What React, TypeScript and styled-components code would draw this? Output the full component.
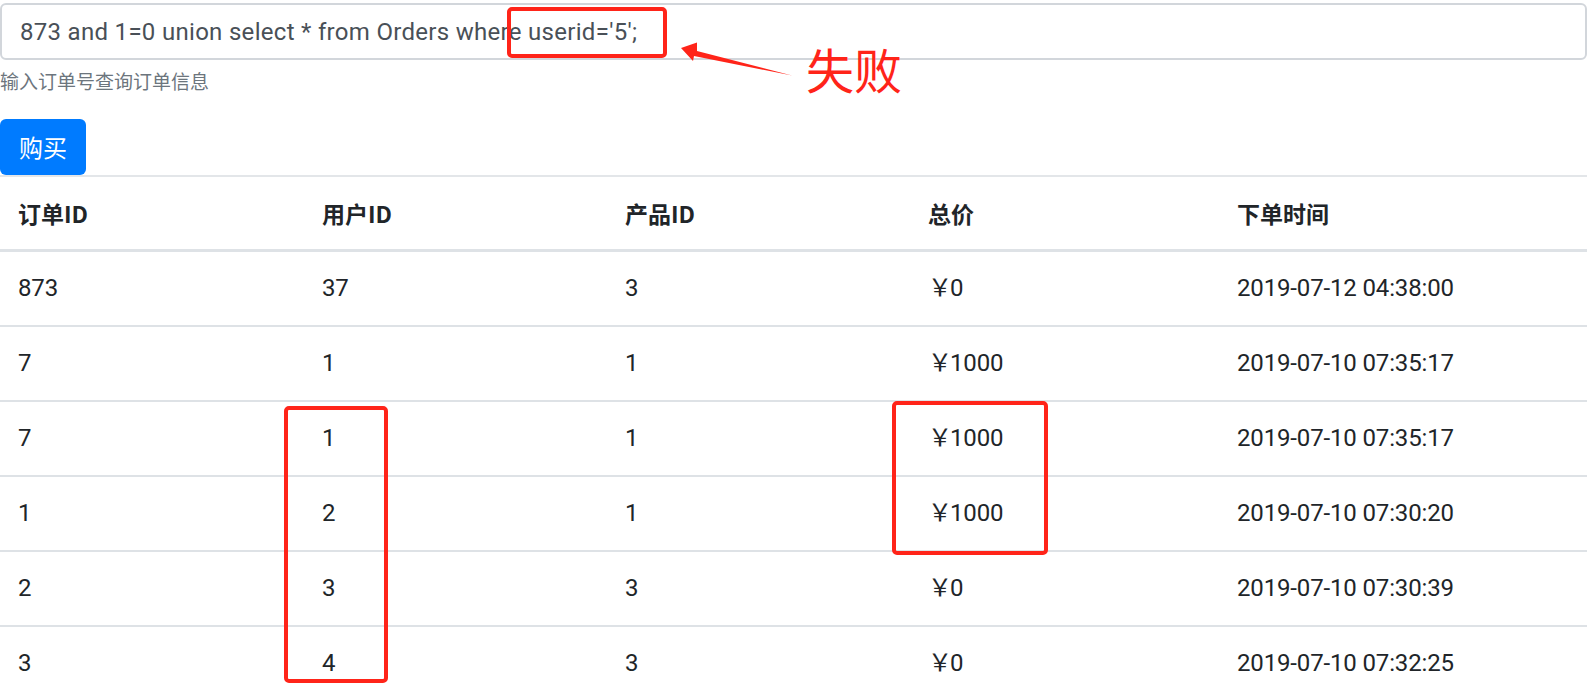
import styled, { createGlobalStyle } from "styled-components"

const GlobalStyle = createGlobalStyle`
    body {
        margin: 0;
        background: #fff;
        color: #212529;
        font-family: Roboto, "Noto Sans CJK SC", sans-serif;
    }
`

const orders = [
    { id: "873", user: "37", product: "3", total: "0", time: "2019-07-12 04:38:00" },
    { id: "7", user: "1", product: "1", total: "1000", time: "2019-07-10 07:35:17" },
    { id: "7", user: "1", product: "1", total: "1000", time: "2019-07-10 07:35:17" },
    { id: "1", user: "2", product: "1", total: "1000", time: "2019-07-10 07:30:20" },
    { id: "2", user: "3", product: "3", total: "0", time: "2019-07-10 07:30:39" },
    { id: "3", user: "4", product: "3", total: "0", time: "2019-07-10 07:32:25" },
]

export default function App() {
    return <Page>
        <GlobalStyle />

        <FormGroup>
            <Input readOnly value="873 and 1=0 union select * from Orders where userid='5';" />
            <HelpText>输入订单号查询订单信息</HelpText>
        </FormGroup>

        <BuyButton>购买</BuyButton>

        <Table>
            <colgroup>
                <col style={{ width: 304 }} />
                <col style={{ width: 303 }} />
                <col style={{ width: 303 }} />
                <col style={{ width: 309 }} />
                <col />
            </colgroup>
            <thead>
                <tr>
                    <Th>订单ID</Th>
                    <Th>用户ID</Th>
                    <Th>产品ID</Th>
                    <Th>总价</Th>
                    <Th>下单时间</Th>
                </tr>
            </thead>
            <tbody>
                {orders.map((o, i) => (
                    <tr key={i}>
                        <Td>{o.id}</Td>
                        <Td>{o.user}</Td>
                        <Td>{o.product}</Td>
                        <Td><Yen>￥</Yen>{o.total}</Td>
                        <Td>{o.time}</Td>
                    </tr>
                ))}
            </tbody>
        </Table>

        {/* screenshot annotations */}
        <RedBox $left={507} $top={7} $width={160} $height={51} />
        <RedBox $left={284} $top={406} $width={104} $height={277} />
        <RedBox $left={892} $top={401} $width={156} $height={154} />
        <Arrow width="130" height="50" viewBox="670 35 130 50">
            <polygon points="681,48 697,42.5 697,51 792,75.5 694,56 693,61" fill="#ff2419" />
        </Arrow>
        <FailLabel>失败</FailLabel>
    </Page>
}

const Page = styled.div`
    position: relative;
    padding-top: 3px;
    height: 686px;
    overflow: hidden;
`

const FormGroup = styled.div`
    margin-bottom: 24px;
`

const Input = styled.input`
    display: block;
    box-sizing: border-box;
    width: 100%;
    height: 57px;
    padding: 9px 18px;
    border: 2px solid #d2d6db;
    border-radius: 6px;
    font-family: Roboto, "Noto Sans CJK SC", sans-serif;
    font-size: 24px;
    letter-spacing: 0.3px;
    color: #495057;
    outline: none;
`

const HelpText = styled.small`
    display: block;
    margin-top: 6px;
    font-family: "Noto Sans CJK SC", sans-serif;
    font-size: 19px;
    line-height: 29px;
    color: #6c757d;
`

const BuyButton = styled.button`
    display: block;
    box-sizing: border-box;
    height: 56px;
    padding: 0 19px;
    border: none;
    border-radius: 6px;
    background: #007bff;
    color: #fff;
    font-family: "Noto Sans CJK SC", sans-serif;
    font-size: 24px;
    line-height: 36px;
`

const Table = styled.table`
    width: 100%;
    table-layout: fixed;
    border-collapse: separate;
    border-spacing: 0;
    color: #212529;
`

const Th = styled.th`
    padding: 18px;
    border-top: 2px solid #e3e6e9;
    border-bottom: 3px solid #dee2e6;
    text-align: left;
    font-family: "Noto Sans CJK SC", sans-serif;
    font-weight: 700;
    font-size: 23px;
    line-height: 36px;
`

const Td = styled.td`
    height: 37px;
    padding: 18px;
    border-bottom: 2px solid #dee2e6;
    font-size: 24px;
    line-height: 37px;
    letter-spacing: -0.15px;
    white-space: nowrap;
`

const Yen = styled.span`
    font-family: "Noto Sans CJK SC", sans-serif;
    line-height: 1;
    letter-spacing: -2px;
`

const RedBox = styled.div<{ $left: number; $top: number; $width: number; $height: number }>`
    position: absolute;
    left: ${p => p.$left}px;
    top: ${p => p.$top}px;
    width: ${p => p.$width}px;
    height: ${p => p.$height}px;
    box-sizing: border-box;
    border: 4px solid #ff2419;
    border-radius: 5px;
`

const Arrow = styled.svg`
    position: absolute;
    left: 670px;
    top: 35px;
`

const FailLabel = styled.div`
    position: absolute;
    left: 806px;
    top: 39px;
    font-family: "Noto Sans CJK SC", sans-serif;
    font-size: 48px;
    line-height: 58px;
    color: #ff2419;
`
